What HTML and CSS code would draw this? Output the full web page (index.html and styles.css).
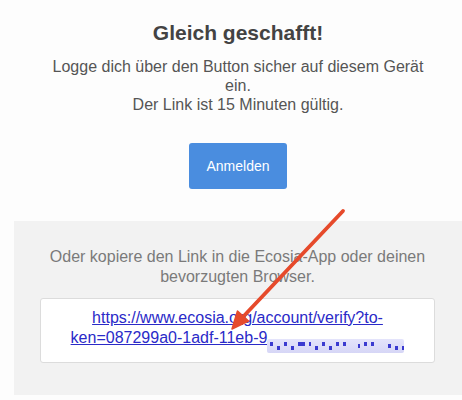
FILE: index.html
```html
<!DOCTYPE html>
<html lang="de">
<head>
<meta charset="utf-8">
<title>Gleich geschafft!</title>
<link rel="stylesheet" href="styles.css">
</head>
<body>
<div class="page">
  <section class="top">
    <h1 class="title">Gleich geschafft!</h1>
    <p class="lead">Logge dich über den Button sicher auf diesem Gerät ein.<br>Der Link ist 15 Minuten gültig.</p>
    <a class="btn" href="#">Anmelden</a>
  </section>
  <section class="panel">
    <p class="hint">Oder kopiere den Link in die Ecosia-App oder deinen bevorzugten Browser.</p>
    <div class="linkbox">
      <a class="link" href="#">https://www.ecosia.org/account/verify?to-<br>ken=087299a0-1adf-11eb-9<span class="blur"><i class="d a"></i><i class="d b"></i><i class="d a"></i><i class="d b"></i><i class="d w a"></i><i class="d a"></i><i class="d b"></i><i class="d a"></i><i class="d b"></i><i class="d a"></i><i class="d a"></i><i class="d sp"></i><i class="d a"></i><i class="d a"></i><i class="d sp2"></i><i class="d b"></i><i class="d b"></i></span></a>
    </div>
  </section>
</div>
<svg class="arrow" width="462" height="400" viewBox="0 0 462 400" aria-hidden="true">
  <line x1="343" y1="211" x2="241" y2="319" stroke="#e64a2b" stroke-width="3.8" stroke-linecap="round"/>
  <polygon points="232,329 248.5,321 237.5,311" fill="#e64a2b" stroke="#e64a2b" stroke-width="1.5" stroke-linejoin="round"/>
</svg>
</body>
</html>
```

FILE: styles.css
```css
html, body {
  margin: 0;
  padding: 0;
  background: #fdfdfd;
  font-family: "Liberation Sans", Arial, Helvetica, sans-serif;
}

.page {
  margin-left: 14px;
  width: 448px;
}

.top {
  display: flex;
  flex-direction: column;
  align-items: center;
  text-align: center;
  padding: 20px 30px 32px;
}

.title {
  margin: 0;
  font-size: 21px;
  line-height: 26px;
  font-weight: bold;
  color: #434343;
}

.lead {
  margin: 11px 0 0;
  font-size: 16px;
  line-height: 19px;
  color: #555;
}

.btn {
  margin-top: 29px;
  width: 98px;
  height: 46px;
  display: flex;
  align-items: center;
  justify-content: center;
  background: #4a8ddf;
  border-radius: 3px;
  color: #fff;
  font-size: 14px;
  text-decoration: none;
}

.panel {
  background: #f2f2f2;
  padding: 26px 27px 32px 26px;
  text-align: center;
}

.hint {
  margin: 0 0 11px;
  font-size: 16px;
  line-height: 20px;
  color: #7a7a7a;
}

.linkbox {
  background: #fff;
  border: 1px solid #dcdcdc;
  border-radius: 3px;
  padding: 9px 8px 9px;
  font-size: 16px;
  line-height: 20px;
}

.link {
  color: #2a2ac8;
  text-decoration: underline;
}

.blur {
  display: inline-flex;
  align-items: center;
  gap: 4px;
  width: 137px;
  height: 14px;
  padding-left: 3px;
  box-sizing: border-box;
  vertical-align: -3px;
  background: linear-gradient(#e4e4fb, #d6d6f6);
  border-radius: 2px;
}

.d {
  display: block;
  width: 4px;
  height: 4px;
  background: #3a3ad0;
}

.d.a { align-self: flex-start; margin-top: 3px; }
.d.b { align-self: flex-end; margin-bottom: 3px; }
.d.w { width: 10px; }
.d.sp { margin-left: 8px; }
.d.sp2 { margin-left: 10px; }

.arrow {
  position: absolute;
  top: 0;
  left: 0;
  pointer-events: none;
}
```
